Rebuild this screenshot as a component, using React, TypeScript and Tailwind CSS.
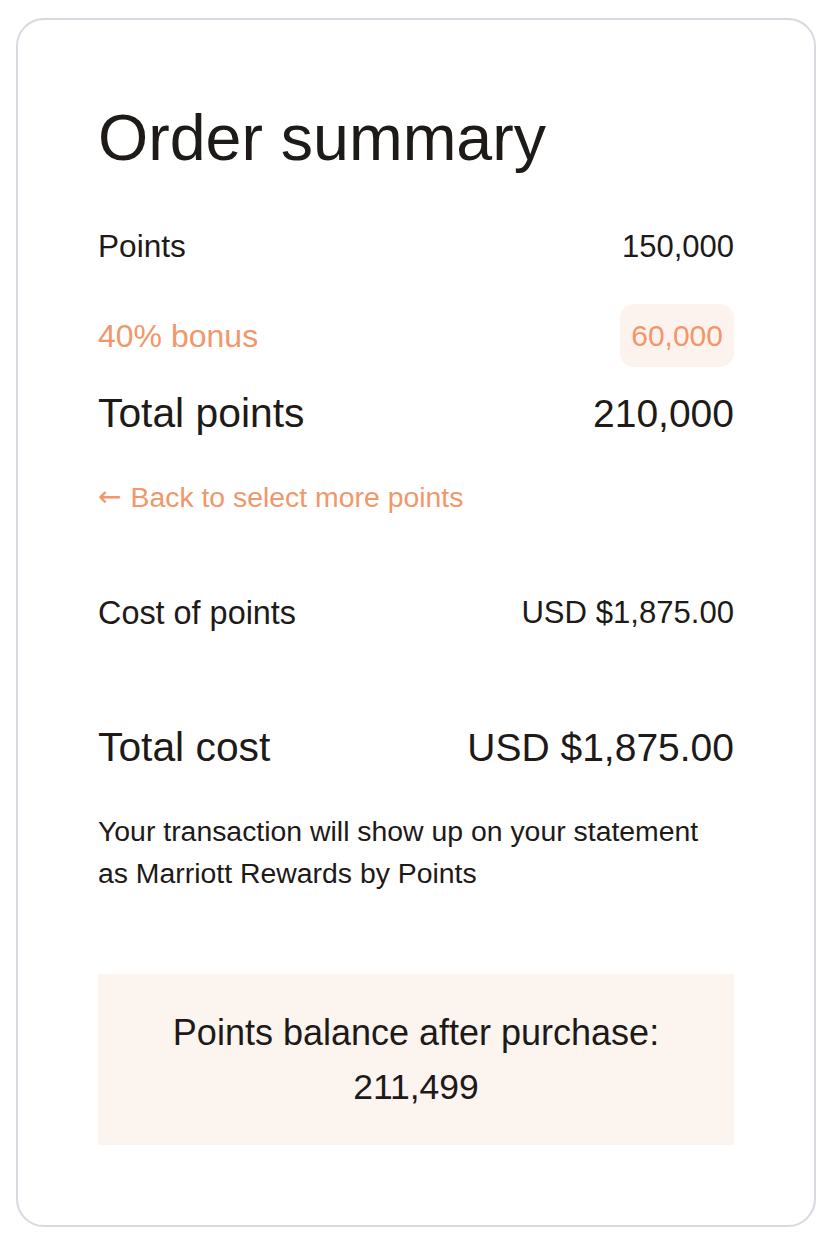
export default function App() {
  return (
    <div className="min-h-[1240px] bg-white pt-[18px] pl-[16px] font-['Liberation_Sans',Arial,sans-serif] text-[#1d1a18]">
      <div className="w-[800px] rounded-[28px] border-2 border-[#d6d9e0] bg-white px-20 pt-[86px] pb-20">
        <h1 className="h-[64px] text-[64.5px] leading-[64px] font-normal">Order summary</h1>

        <div className="mt-[45px] flex h-[64px] items-center justify-between">
          <span className="text-[31.6px]">Points</span>
          <span className="text-[31px]">150,000</span>
        </div>

        <div className="mt-[25px] flex h-[63px] items-center justify-between text-[#f2976a]">
          <span className="text-[32px]">40% bonus</span>
          <span className="flex h-[63px] items-center rounded-[14px] bg-[#fdf3ee] px-[11px] text-[30px]">60,000</span>
        </div>

        <div className="mt-[15px] flex h-[64px] items-center justify-between">
          <span className="text-[40.8px]">Total points</span>
          <span className="text-[39px]">210,000</span>
        </div>

        <div className="mt-[30px] flex h-[42px] items-center text-[28px] leading-[42px] text-[#f2976a]">
          <span className="font-['DejaVu_Sans',sans-serif] text-[28px]">←</span>
          <span className="ml-[9px] text-[28.4px]">Back to select more points</span>
        </div>

        <div className="mt-[63px] flex h-[64px] items-center justify-between">
          <span className="text-[32.4px]">Cost of points</span>
          <span className="text-[31.1px]">USD $1,875.00</span>
        </div>

        <div className="mt-[71px] flex h-[64px] items-center justify-between">
          <span className="text-[40.8px]">Total cost</span>
          <span className="text-[39px]">USD $1,875.00</span>
        </div>

        <p className="mt-[30px] text-[28.4px] leading-[42px]">
          Your transaction will show up on your statement
          <br />
          as Marriott Rewards by Points
        </p>

        <div className="mt-[80px] bg-[#fcf4ef] pt-8 pb-[31px] text-center leading-[54px]">
          <div className="text-[36px]">Points balance after purchase:</div>
          <div className="text-[35.5px]">211,499</div>
        </div>
      </div>
    </div>
  );
}
